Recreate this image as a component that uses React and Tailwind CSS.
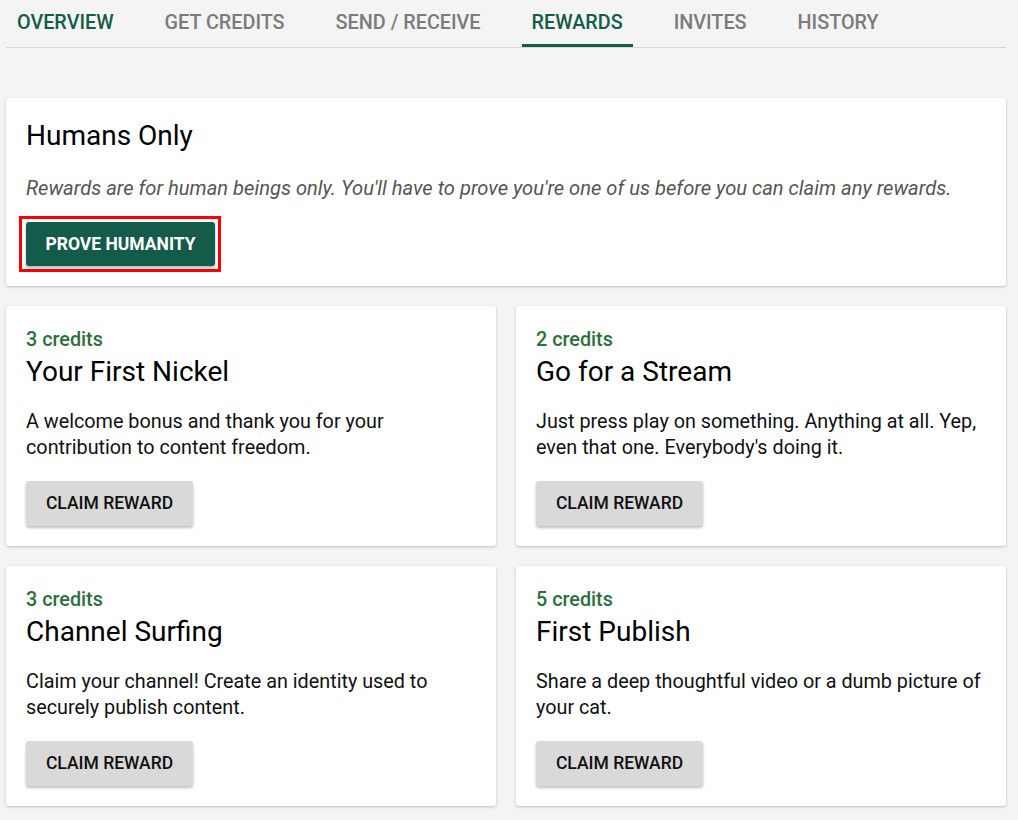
const TABS = ['Overview', 'Get Credits', 'Send / Receive', 'Rewards', 'Invites', 'History'];

const REWARDS = [
    { credits: 3, title: 'Your First Nickel', body: 'A welcome bonus and thank you for your contribution to content freedom.' },
    { credits: 2, title: 'Go for a Stream', body: "Just press play on something. Anything at all. Yep, even that one. Everybody's doing it." },
    { credits: 3, title: 'Channel Surfing', body: 'Claim your channel! Create an identity used to securely publish content.' },
    { credits: 5, title: 'First Publish', body: 'Share a deep thoughtful video or a dumb picture of your cat.' },
];

const card = 'bg-white rounded-[3px] shadow-[0_1px_3px_rgba(0,0,0,0.22)]';

export default function App() {
    return (
        <div className="min-h-[820px] bg-[#f4f4f4] pl-[6px] pr-[12px] text-black" style={{ fontFamily: 'Roboto, "Liberation Sans", sans-serif' }}>
            {/* Tabs */}
            <div className="flex gap-[31px] border-b border-[#d6d6d6] pl-[1px]">
                {TABS.map(t => (
                    <div key={t}
                        className={`h-[47px] px-[10px] pt-[11px] text-[19.8px] font-medium uppercase leading-[24px] whitespace-nowrap border-b-[3px] ${t === 'Rewards' ? 'text-[#155b4a] border-[#155b4a]' : t === 'Overview' ? 'text-[#155b4a] border-transparent' : 'text-[#7b7b7b] border-transparent'}`}>
                        {t}
                    </div>
                ))}
            </div>

            {/* Humans only */}
            <div className={`${card} mt-[50px] px-[20px] pt-[21px] pb-[14px]`}>
                <h2 className="text-[28px] leading-[34px]">Humans Only</h2>
                <p className="mt-[22px] text-[20.15px] leading-[26px] italic text-[#555]">
                    Rewards are for human beings only. You'll have to prove you're one of us before you can claim any rewards.
                </p>
                <div className="mt-[15px] -ml-[7px] inline-block border-[3px] border-[#ff0000] pt-[3px] pb-[3px] pl-[4px] pr-[3px]">
                    <button className="block h-[44px] w-[189px] rounded-[3px] bg-[#155b4a] text-white text-[17.5px] font-bold uppercase shadow-[0_2px_3px_rgba(0,0,0,0.3)]">
                        Prove Humanity
                    </button>
                </div>
            </div>

            {/* Rewards grid */}
            <div className="mt-[20px] grid grid-cols-2 gap-[20px]">
                {REWARDS.map(r => (
                    <div key={r.title} className={`${card} h-[240px] px-[20px] pt-[22px]`}>
                        <div className="text-[19.8px] leading-[24px] font-medium text-[#2b6f3b]">{r.credits} credits</div>
                        <h3 className="mt-[3px] text-[28px] leading-[34px]">{r.title}</h3>
                        <p className="mt-[20px] text-[19.8px] leading-[26px] text-[#111] min-h-[52px]">{r.body}</p>
                        <button className="mt-[20px] h-[45px] w-[167px] rounded-[3px] bg-[#d9d9d9] text-[17.5px] font-medium uppercase text-[#111] shadow-[0_2px_3px_rgba(0,0,0,0.25)]">
                            Claim Reward
                        </button>
                    </div>
                ))}
            </div>
        </div>
    );
}
